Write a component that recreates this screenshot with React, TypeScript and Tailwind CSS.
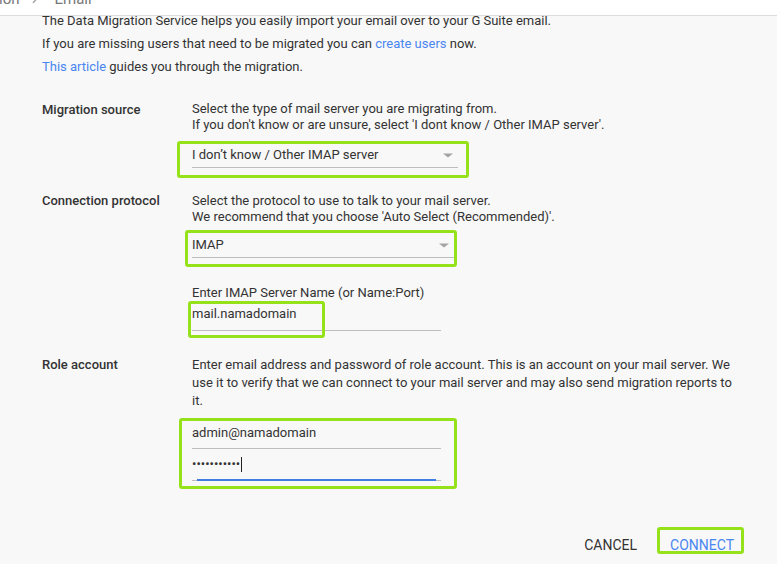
import { ChevronRight } from "lucide-react"

const GREEN = "pointer-events-none absolute border-[3px] border-[#95e21b] rounded-[3px]"

function Arrow() {
  return (
    <svg width="10" height="5" viewBox="0 0 10 5" className="shrink-0">
      <path d="M0 0.5h10L5 4.5z" fill="#a3a3a3" />
    </svg>
  )
}

function Select({ value, width }: { value: string; width: string }) {
  return (
    <div className={`flex items-center justify-between leading-4 pb-[4px] border-b border-[#bdbdbd] pr-[5px] ${width}`}>
      <span>{value}</span>
      <Arrow />
    </div>
  )
}

export default function App() {
  return (
    <div className="w-[777px] h-[564px] overflow-hidden bg-[#f8f8f8] text-[13px] text-[#333] font-['Roboto',sans-serif]">
      <div className="relative z-10 h-[16px] bg-white border-b border-[#dcdcdc] overflow-hidden">
        <div className="flex items-center -mt-[11px] text-[15px] leading-5 text-[#777]">
          <span className="-ml-[1px]">ion</span>
          <ChevronRight size={14} className="ml-[8px] text-[#999]" strokeWidth={2} />
          <span className="ml-[13px]">Email</span>
        </div>
      </div>

      <div className="-mt-[3px] pl-[42px] flex flex-col gap-[7px] leading-4">
        <div>The Data Migration Service helps you easily import your email over to your G Suite email.</div>
        <div>
          If you are missing users that need to be migrated you can{" "}
          <a className="text-[#4a86f0]">create users</a> now.
        </div>
        <div>
          <a className="text-[#4a86f0]">This article</a> guides you through the migration.
        </div>
      </div>

      <div className="flex pl-[42px] mt-[26px]">
        <div className="w-[150px] shrink-0 font-medium leading-4 pt-px">Migration source</div>
        <div className="w-[545px] leading-4">
          <div>Select the type of mail server you are migrating from.</div>
          <div>If you don't know or are unsure, select 'I dont know / Other IMAP server'.</div>
          <div className="relative mt-[14px] w-[266px]">
            <Select value="I don’t know / Other IMAP server" width="w-[266px]" />
            <span className={`${GREEN} -left-[15px] -top-[6px] -right-[11px] -bottom-[10px]`} />
          </div>
        </div>
      </div>

      <div className="flex pl-[42px] mt-[25px]">
        <div className="w-[150px] shrink-0 font-medium leading-4">Connection protocol</div>
        <div className="w-[545px] leading-4">
          <div>Select the protocol to use to talk to your mail server.</div>
          <div>We recommend that you choose 'Auto Select (Recommended)'.</div>
          <div className="relative mt-[12px] w-[262px]">
            <Select value="IMAP" width="w-[262px]" />
            <span className={`${GREEN} -left-[7px] -top-[7px] -right-[3px] -bottom-[9px]`} />
          </div>
          <div className="mt-[27px]">Enter IMAP Server Name (or Name:Port)</div>
          <div className="relative mt-[5px] w-[249px] pb-[8px] border-b border-[#bdbdbd]">
            <span>mail.namadomain</span>
            <span className="pointer-events-none absolute border-[3px] border-[#95e21b] rounded-[3px] -left-[4px] -top-[5px] w-[137px] -bottom-[8px]" />
          </div>
        </div>
      </div>

      <div className="flex pl-[42px] mt-[25px] leading-[18px]">
        <div className="w-[150px] shrink-0 font-medium">Role account</div>
        <div className="w-[545px]">
          <div>
            Enter email address and password of role account. This is an account on your mail server. We use it to
            verify that we can connect to your mail server and may also send migration reports to it.
          </div>
          <div className="relative mt-[15px] w-[249px] leading-4">
            <div className="pb-[7px] border-b border-[#bdbdbd]">admin@namadomain</div>
            <div className="relative mt-[7px] pb-[8px] border-b border-[#bdbdbd] flex items-center">
              <span className="text-[13px] tracking-[0px]">•••••••••••</span>
              <span className="ml-[1px] w-px h-[15px] bg-[#222]" />
              <span className="absolute left-[5px] right-[5px] -bottom-px h-[2px] bg-[#3f7de3]" />
            </div>
            <span className={`${GREEN} -left-[13px] -top-[7px] -right-[16px] -bottom-[8px]`} />
          </div>
        </div>
      </div>

      <div className="flex justify-end items-center gap-[33px] pr-[43px] mt-[56px] text-[14px] leading-4">
        <button className="uppercase text-[#333]">Cancel</button>
        <button className="relative uppercase text-[#4a86f0]">
          Connect
          <span className={`${GREEN} -left-[13px] -top-[10px] -right-[10px] -bottom-[1px]`} />
        </button>
      </div>
    </div>
  )
}
